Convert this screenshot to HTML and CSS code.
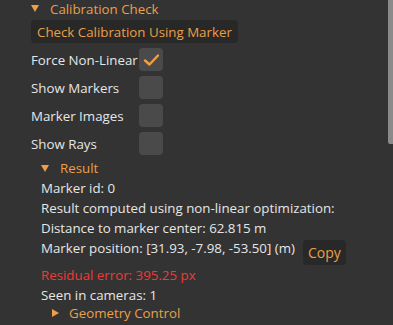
FILE: index.html
```html
<!DOCTYPE html>
<html lang="en">
<head>
    <meta charset="UTF-8">
    <title>Calibration Check</title>
    <link rel="stylesheet" href="styles.css">
</head>
<body>
<div id="window">
    <div id="panel">
        <div class="tree-node open lvl1">
            <span class="arrow down"></span>
            <span class="label">Calibration Check</span>
        </div>
        <div class="lvl1">
            <button class="btn">Check Calibration Using Marker</button>
        </div>
        <div class="check-row lvl1">
            <span>Force Non-Linear</span>
            <span class="checkbox">
                <svg width="17" height="14" viewBox="0 0 17 14">
                    <polyline points="2,7.5 6.5,11.5 15,2.5" fill="none" stroke="#f0a040" stroke-width="2.4" stroke-linecap="round" stroke-linejoin="round"/>
                </svg>
            </span>
        </div>
        <div class="check-row lvl1">
            <span>Show Markers</span>
            <span class="checkbox"></span>
        </div>
        <div class="check-row lvl1">
            <span>Marker Images</span>
            <span class="checkbox"></span>
        </div>
        <div class="check-row lvl1">
            <span>Show Rays</span>
            <span class="checkbox"></span>
        </div>
        <div class="tree-node open lvl2-node">
            <span class="arrow down"></span>
            <span class="label">Result</span>
        </div>
        <div class="lvl2 line">Marker id: 0</div>
        <div class="lvl2 line">Result computed using non-linear optimization:</div>
        <div class="lvl2 line">Distance to marker center: 62.815 m</div>
        <div class="lvl2 pos-row">
            <span class="line">Marker position: [31.93, -7.98, -53.50] (m)</span>
            <button class="btn copy">Copy</button>
        </div>
        <div class="lvl2 line error">Residual error: 395.25 px</div>
        <div class="lvl2 line">Seen in cameras: 1</div>
        <div class="tree-node lvl3-node">
            <span class="arrow right"></span>
            <span class="label">Geometry Control</span>
        </div>
    </div>
    <div id="scrollbar">
        <div class="thumb"></div>
    </div>
</div>
</body>
</html>
```

FILE: styles.css
```css
* {
    margin: 0;
    padding: 0;
    box-sizing: border-box;
}

body {
    background: #333333;
    color: #e6e6e6;
    font-family: 'Open Sans', 'Noto Sans', sans-serif;
    font-size: 13.3px;
    height: 325px;
    overflow: hidden;
}

#window {
    display: flex;
    height: 325px;
}

#panel {
    flex: 1;
    display: flex;
    flex-direction: column;
}

#scrollbar {
    width: 5px;
}

#scrollbar .thumb {
    height: 144px;
    background: #8a8a8a;
    border-radius: 0 0 0 2px;
}

.lvl1 { padding-left: 31px; }
.lvl2 { padding-left: 41px; }

.tree-node {
    display: flex;
    align-items: center;
    height: 17px;
    color: #ec9f45;
}

.tree-node.lvl2-node {
    height: 20px;
    margin-top: 3px;
    padding-left: 41px;
}

.tree-node.lvl3-node {
    height: 20px;
    padding-left: 52px;
    margin-top: -2px;
}

.arrow {
    width: 0;
    height: 0;
    margin-right: 11px;
}

.arrow.down {
    border-left: 4px solid transparent;
    border-right: 4px solid transparent;
    border-top: 7px solid #ec9f45;
}

.arrow.right {
    border-top: 4px solid transparent;
    border-bottom: 4px solid transparent;
    border-left: 7px solid #ec9f45;
    margin-right: 10px;
}

.btn {
    font-family: inherit;
    font-size: 13.3px;
    color: #ec9f45;
    background: #282828;
    border: none;
    border-radius: 4px;
    height: 23px;
    padding: 0 6px;
    margin-top: 3px;
}

.check-row {
    display: flex;
    align-items: center;
    gap: 4px;
    margin-top: 5px;
    height: 23px;
}

.check-row span:first-child {
    width: 104px;
    white-space: nowrap;
}

.checkbox {
    width: 24px;
    height: 23px;
    background: #4a4a4a;
    border-radius: 4px;
    display: flex;
    align-items: center;
    justify-content: center;
}

.line {
    line-height: 20px;
    height: 20px;
    white-space: nowrap;
}

.pos-row {
    display: flex;
    align-items: flex-start;
    height: 27px;
}

.btn.copy {
    height: 25px;
    margin: 2px 0 0 8px;
    font-size: 14px;
    padding: 0 5px;
}

.error {
    color: #f03a36;
}
```
